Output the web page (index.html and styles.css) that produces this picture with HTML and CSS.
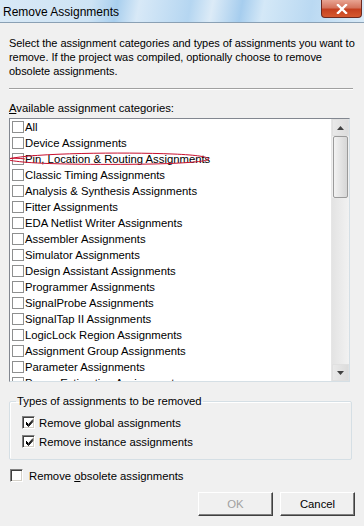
FILE: index.html
```html
<!DOCTYPE html>
<html>
<head>
<meta charset="utf-8">
<link rel="stylesheet" href="styles.css">
</head>
<body>
<div class="win">
  <div class="titlebar">
    <span class="title">Remove Assignments</span>
    <div class="close"><svg width="14" height="10" viewBox="0 0 14 10"><path d="M3 1 L11 9 M11 1 L3 9" stroke="#fff" stroke-width="2.4" stroke-linecap="square"/></svg></div>
  </div>
  <div class="content">
    <p class="desc">Select the assignment categories and types of assignments you want to remove. If the project was compiled, optionally choose to remove obsolete assignments.</p>
    <div class="sep"></div>
    <div class="lbl"><u>A</u>vailable assignment categories:</div>
    <div class="listbox">
      <div class="items">
        <div class="item"><span class="cb"></span>All</div>
        <div class="item"><span class="cb"></span>Device Assignments</div>
        <div class="item"><span class="cb"></span>Pin, Location &amp; Routing Assignments</div>
        <div class="item"><span class="cb"></span>Classic Timing Assignments</div>
        <div class="item"><span class="cb"></span>Analysis &amp; Synthesis Assignments</div>
        <div class="item"><span class="cb"></span>Fitter Assignments</div>
        <div class="item"><span class="cb"></span>EDA Netlist Writer Assignments</div>
        <div class="item"><span class="cb"></span>Assembler Assignments</div>
        <div class="item"><span class="cb"></span>Simulator Assignments</div>
        <div class="item"><span class="cb"></span>Design Assistant Assignments</div>
        <div class="item"><span class="cb"></span>Programmer Assignments</div>
        <div class="item"><span class="cb"></span>SignalProbe Assignments</div>
        <div class="item"><span class="cb"></span>SignalTap II Assignments</div>
        <div class="item"><span class="cb"></span>LogicLock Region Assignments</div>
        <div class="item"><span class="cb"></span>Assignment Group Assignments</div>
        <div class="item"><span class="cb"></span>Parameter Assignments</div>
        <div class="item"><span class="cb"></span>Power Estimation Assignments</div>
      </div>
      <div class="scroll">
        <div class="sbtn"><svg width="7" height="4" viewBox="0 0 7 4"><path d="M0 4 L3.5 0 L7 4 Z" fill="#404040"/></svg></div>
        <div class="thumb"></div>
        <div class="track"></div>
        <div class="sbtn"><svg width="7" height="4" viewBox="0 0 7 4"><path d="M0 0 L3.5 4 L7 0 Z" fill="#404040"/></svg></div>
      </div>
      <svg class="mark" width="215" height="16" viewBox="0 0 215 16"><path d="M5 8 C30 2, 120 1, 170 3 C195 4, 205 6, 206 8 C205 10, 190 12, 150 13 C90 14, 40 13, 20 11 C10 10, 4 9, 1 8 C8 7, 16 7, 22 8" fill="none" stroke="#c8102e" stroke-width="1"/></svg>
    </div>
    <fieldset class="group">
      <legend>Types of assignments to be removed</legend>
      <div class="chk"><span class="cb3d on"><svg width="9" height="9" viewBox="0 0 9 9"><path d="M1 4 L3.5 6.5 L8 1.5 M1 5 L3.5 7.5 L8 2.5 M1 3 L3.5 5.5 L8 0.5" fill="none" stroke="#000" stroke-width="1"/></svg></span><span>Remove global assignments</span></div>
      <div class="chk"><span class="cb3d on"><svg width="9" height="9" viewBox="0 0 9 9"><path d="M1 4 L3.5 6.5 L8 1.5 M1 5 L3.5 7.5 L8 2.5 M1 3 L3.5 5.5 L8 0.5" fill="none" stroke="#000" stroke-width="1"/></svg></span><span>Remove instance assignments</span></div>
    </fieldset>
    <div class="chk obs"><span class="cb3d"></span><span>Remove <u>o</u>bsolete assignments</span></div>
    <div class="buttons">
      <div class="btn disabled">OK</div>
      <div class="btn">Cancel</div>
    </div>
  </div>
</div>
</body>
</html>
```
FILE: styles.css
```css
html, body { margin: 0; padding: 0; }
body {
  width: 364px; height: 526px; overflow: hidden;
  background: #f0f0f0;
  font-family: "Liberation Sans", Arial, sans-serif;
  font-size: 11px; color: #000;
}
.win { width: 364px; height: 526px; display: flex; flex-direction: column; }
.titlebar {
  height: 23px; box-sizing: border-box;
  border-bottom: 1px solid #8aa0b4;
  background: linear-gradient(100deg, #d9e9f6 0%, #cde3f4 25%, #a9cfee 32%, #d8e9f7 38%, #b5d6f1 52%, #dcebf7 58%, #a6cdee 66%, #d4e8f7 72%, #bad9f2 85%, #d9eaf7 100%);
  display: flex; align-items: flex-start; justify-content: space-between;
  position: relative;
}
.title { font-size: 12px; padding: 5px 0 0 3px; color: #000; }
.close {
  width: 41px; height: 18px; margin-right: 2px;
  box-sizing: border-box; border: 1px solid #6d2a20; border-top: none;
  border-radius: 0 0 4px 4px;
  background: linear-gradient(#e8a492 0%, #d4745d 45%, #c5401f 55%, #d6592f 100%);
  display: flex; align-items: center; justify-content: center;
}
.content { padding: 0 9px; display: flex; flex-direction: column; }
.desc { margin: 13px 0 0 0; line-height: 14px; width: 348px; font-size: 11px; letter-spacing: -0.05px; }
.sep { height: 0; border-top: 1px solid #a0a0a0; border-bottom: 1px solid #fff; margin: 10px 2px 0 0; }
.lbl { margin-top: 11px; line-height: 14px; font-size: 11.3px; }
.listbox {
  position: relative;
  margin-top: 3px; width: 341px; height: 264px; box-sizing: border-box;
  border: 1px solid #828790; border-right-color: #d5dfe5; border-bottom-color: #d5dfe5;
  background: #fff; display: flex; overflow: hidden;
}
.items { flex: 1; padding-top: 0; overflow: hidden; }
.item { height: 16px; display: flex; align-items: center; line-height: 16px; white-space: nowrap; font-size: 11.3px; }
.cb { border: 1px solid #8e8f8f; background: #fff; margin: 0 1px 0 2px; flex: none; box-sizing: border-box; width: 12px; height: 12px; }
.scroll { width: 17px; display: flex; flex-direction: column; background: #f0f0f0; border-left: 1px solid #e6e6e6; }
.sbtn { height: 17px; display: flex; align-items: center; justify-content: center; background: linear-gradient(90deg, #e9e9e9, #dcdcdc); border: 1px solid #e0e0e0; box-sizing: border-box; }
.thumb { height: 62px; margin: 0 1px; border: 1px solid #9a9a9a; border-radius: 2px; background: linear-gradient(90deg, #f2f2f2, #d6d6d6); box-sizing: border-box; }
.track { flex: 1; background: linear-gradient(90deg, #e3e3e3, #f2f2f2); }
.mark { position: absolute; left: -7px; top: 32px; }
.group {
  margin: 13px 0 0 0; padding: 6px 0 8px 12px; width: 343px; box-sizing: border-box;
  border: 1px solid #d5dfe5; border-radius: 2px;
  box-shadow: inset 1px 1px 0 #fff;
  min-width: 0;
}
.group legend { padding: 0 1px; margin-left: -6px; font-size: 11.3px; }
.chk { display: flex; align-items: center; height: 19px; font-size: 11.3px; white-space: pre; }
.cb3d {
  width: 13px; height: 13px; box-sizing: border-box; flex: none;
  border-top: 1px solid #808080; border-left: 1px solid #808080;
  border-right: 1px solid #fff; border-bottom: 1px solid #fff;
  box-shadow: inset 1px 1px 0 #404040, inset -1px -1px 0 #d4d0c8;
  background: #fff; margin-right: 4px;
  display: flex; align-items: center; justify-content: center;
}
.cb3d svg { margin-left: 1px; margin-top: 1px; }
.obs { margin-top: 6px; margin-left: 1px; }
.obs .cb3d { margin-right: 6px; }
.buttons { display: flex; justify-content: flex-end; gap: 7px; margin-top: 7px; margin-right: 0; }
.btn {
  width: 75px; height: 24px; box-sizing: border-box;
  border-top: 1px solid #fff; border-left: 1px solid #fff;
  border-right: 1px solid #404040; border-bottom: 1px solid #404040;
  box-shadow: inset -1px -1px 0 #808080;
  background: #f0f0f0; display: flex; align-items: center; justify-content: center;
  font-size: 11.3px;
}
.btn.disabled { color: #a0a0a0; }
```
